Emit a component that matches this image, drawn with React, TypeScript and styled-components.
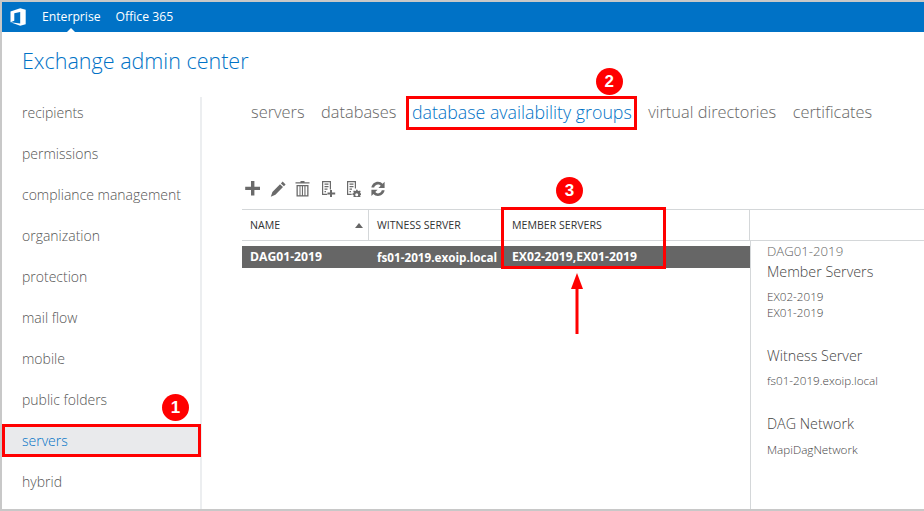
import styled, { createGlobalStyle } from 'styled-components';

const GlobalStyle = createGlobalStyle`
  html, body { margin: 0; padding: 0; background: #fff; }
  * { box-sizing: border-box; }
  body { font-family: "Open Sans", "Noto Sans", sans-serif; }
`;

const Frame = styled.div`
  position: relative;
  width: 924px;
  height: 511px;
  display: flex;
  flex-direction: column;
  overflow: hidden;
  background: #fff;
  border-top: 2px solid #c8c8c8;
  border-left: 2px solid #c8c8c8;
  border-bottom: 2px solid #c8c8c8;
`;

const TopBar = styled.header`
  flex: none;
  height: 30px;
  background: #0072c6;
  display: flex;
  align-items: center;
  padding-left: 8px;
  color: #fff;
  font-size: 12.2px;
`;

const TopLink = styled.span<{ $active?: boolean }>`
  position: relative;
  height: 30px;
  line-height: 30px;
  margin-right: 15px;
  &::after {
    content: '';
    display: ${(p) => (p.$active ? 'block' : 'none')};
    position: absolute;
    left: 50%;
    bottom: 0;
    margin-left: -4px;
    border: 4px solid transparent;
    border-top: 0;
    border-bottom-color: #fff;
  }
`;

const LogoWrap = styled.span`
  display: flex;
  width: 32px;
`;

const Title = styled.h1`
  flex: none;
  margin: 0;
  height: 65px;
  padding: 13px 0 0 20px;
  font-size: 21.5px;
  line-height: 32px;
  font-weight: 300;
  color: #0072c6;
`;

const Body = styled.div`
  flex: 1;
  display: flex;
  min-height: 0;
`;

const Sidebar = styled.nav`
  flex: none;
  width: 200px;
  border-right: 2px solid #eceef0;
  display: flex;
  flex-direction: column;
  gap: 9px;
`;

const SideItem = styled.div<{ $active?: boolean }>`
  position: relative;
  height: 32px;
  line-height: 32px;
  padding-left: 20px;
  font-size: 14px;
  font-weight: 300;
  color: ${(p) => (p.$active ? '#0072c6' : '#555')};
  background: ${(p) => (p.$active ? '#e9eaec' : 'transparent')};
  ${(p) => p.$active && `
    height: 33px;
    margin: -1px -1px 0 0;
    line-height: 34px;
    outline: 3px solid #f00;
    outline-offset: -3px;
    z-index: 1;
  `}
`;

const Main = styled.main`
  flex: 1;
  min-width: 0;
  display: flex;
  flex-direction: column;
`;

const Tabs = styled.div`
  flex: none;
  height: 30px;
  display: flex;
  align-items: center;
  padding-left: 49px;
  gap: 16.5px;
`;

const Tab = styled.span<{ $active?: boolean }>`
  position: relative;
  font-size: ${(p) => (p.$active ? '17.8px' : '16.4px')};
  line-height: 30px;
  font-weight: 300;
  color: ${(p) => (p.$active ? '#0072c6' : '#666')};
  margin-left: ${(p) => (p.$active ? '-1px' : '0')};
`;

const TabBox = styled.span`
  position: absolute;
  left: -6px;
  right: -5px;
  top: -1px;
  bottom: -3px;
  border: 3px solid #f00;
`;

const Toolbar = styled.div`
  flex: none;
  margin-top: 48px;
  height: 44px;
  padding: 6px 0 0 43px;
  display: flex;
  align-items: flex-start;
  gap: 9px;
`;

const ToolIcon = styled.svg`
  width: 16px;
  height: 16px;
  fill: #6a6a6a;
`;

const Split = styled.div`
  position: relative;
  flex: 1;
  display: flex;
  min-height: 0;
  margin-left: 40px;
  margin-top: -10px;
`;

const ListPane = styled.div`
  flex: none;
  width: 508px;
  display: flex;
  flex-direction: column;
`;

const HeaderRow = styled.div`
  flex: none;
  height: 32px;
  display: grid;
  grid-template-columns: 127px 133px 1fr;
  border-top: 1px solid #d4d7d9;
  border-bottom: 1px solid #d4d7d9;
`;

const HeaderCell = styled.div`
  position: relative;
  padding-left: 8px;
  font-size: 10.6px;
  line-height: 30px;
  color: #333;
  border-right: 1px solid #d4d7d9;
  &:nth-child(2) { padding-left: 8px; border-right: 0; }
  &:last-child { padding-left: 10px; }
`;

const SortCaret = styled.span`
  position: absolute;
  right: 5px;
  top: 13px;
  border: 4px solid transparent;
  border-top: 0;
  border-bottom: 5px solid #666;
`;

const DataRow = styled.div`
  flex: none;
  margin-top: 5px;
  height: 22px;
  display: grid;
  grid-template-columns: 127px 133px 1fr;
  background: #666;
  color: #fff;
  font-size: 12.2px;
  font-weight: 700;
  line-height: 22px;
`;

const DataCell = styled.div`
  padding-left: 8px;
  white-space: nowrap;
  overflow: hidden;
  &:nth-child(2) { font-size: 11.7px; }
  &:last-child { padding-left: 10px; }
`;

const DetailPane = styled.aside`
  flex: 1;
  display: flex;
  flex-direction: column;
  min-width: 0;
`;

const DetailHead = styled.div`
  flex: none;
  height: 32px;
  border-top: 1px solid #d4d7d9;
  border-bottom: 1px solid #d4d7d9;
`;

const DetailBody = styled.div`
  flex: 1;
  border-left: 1px solid #d4d7d9;
  padding: 1px 0 0 16px;
  color: #444;
`;

const DetailName = styled.div`
  font-size: 13.2px;
  line-height: 18px;
  font-weight: 300;
  color: #666;
`;

const DetailHeading = styled.div<{ $gap: number }>`
  font-size: 14.3px;
  line-height: 20px;
  font-weight: 300;
  margin-top: ${(p) => p.$gap}px;
`;

const DetailValues = styled.div<{ $gap: number }>`
  font-size: 11.7px;
  line-height: 16px;
  font-weight: 300;
  margin-top: ${(p) => p.$gap}px;
`;

const MemberBox = styled.div`
  position: absolute;
  left: 259px;
  top: -2px;
  width: 165px;
  height: 62px;
  border: 3px solid #f00;
`;

const Badge = styled.span`
  position: absolute;
  width: 27px;
  height: 27px;
  border-radius: 50%;
  background: #f00;
  color: #fff;
  font-family: "Liberation Sans", sans-serif;
  font-weight: 700;
  font-size: 17px;
  line-height: 27px;
  text-align: center;
`;

const SideBadge = styled(Badge)`
  right: 12px;
  top: -30px;
`;

const TabBadge = styled(Badge)`
  right: 9px;
  top: -29px;
`;

const MemberBadge = styled(Badge)`
  left: 52px;
  top: -33px;
`;

const Arrow = styled.svg`
  position: absolute;
  left: 67px;
  top: 63px;
  width: 12px;
  height: 61px;
`;

const sideItems = [
  'recipients',
  'permissions',
  'compliance management',
  'organization',
  'protection',
  'mail flow',
  'mobile',
  'public folders',
  'servers',
  'hybrid',
];

export default function App() {
  return (
    <Frame>
      <GlobalStyle />
      <TopBar>
        <LogoWrap>
          <svg width="16" height="18" viewBox="0 0 16 18">
            <path fill="#fff" d="M.5 3.600 10.200.3 15.700 1.800v14.400l-5.500 1.600-9.700-3.500 9.700 1.200V4L4.300 5.300v7.500L.5 14.300z" />
          </svg>
        </LogoWrap>
        <TopLink $active>Enterprise</TopLink>
        <TopLink>Office 365</TopLink>
      </TopBar>
      <Title>Exchange admin center</Title>
      <Body>
        <Sidebar>
          {sideItems.map((item) => (
            <SideItem key={item} $active={item === 'servers'}>
              {item}
              {item === 'servers' && <SideBadge>1</SideBadge>}
            </SideItem>
          ))}
        </Sidebar>
        <Main>
          <Tabs>
            <Tab>servers</Tab>
            <Tab>databases</Tab>
            <Tab $active>
              database availability groups
              <TabBox />
              <TabBadge>2</TabBadge>
            </Tab>
            <Tab>virtual directories</Tab>
            <Tab>certificates</Tab>
          </Tabs>
          <Toolbar>
            <ToolIcon viewBox="0 0 16 16"><path d="M6 0h3.400v5.700H15v3.300H9.400v5.600H6V9H.2V5.700H6z" /></ToolIcon>
            <ToolIcon viewBox="0 0 16 16"><path d="M12.600.6l3 2.800-1.700 1.800-3-2.800zM10 3.200l3 2.800-7.600 7.700-4.600 2 1.600-4.700z" /></ToolIcon>
            <ToolIcon viewBox="0 0 16 16"><path fillRule="evenodd" d="M5.500 0h4v1.300h5v1.200h-14V1.300h5zM1.500 4h12v11.500h-12zM2.800 5.300v9h1.700v-9zM5.500 5.300v9h1.400v-9zM8 5.300v9h1.400v-9zM10.500 5.300v9h1.700v-9z" /></ToolIcon>
            <ToolIcon viewBox="0 0 16 16"><path fillRule="evenodd" d="M2 0h9v8.500H9.800V1.200H3.200v11.600h4v1.200H2zM4.500 2.500h4v1.200h-4zM4.500 5h4v1.200h-4zM4.500 7.500h3v1.200h-3zM4.500 10h1.500v1.200H4.500zM10 9h2v2.500h3.200v2H12V16h-2v-2.500H7.500v-2H10z" /></ToolIcon>
            <ToolIcon viewBox="0 0 16 16"><path fillRule="evenodd" d="M2 0h9v7.500H9.800V1.200H3.200v11.600h3.500V14H2zM4.500 2.500h4v1.200h-4zM4.500 5h4v1.200h-4zM4.500 7.500h2.500v1.200H4.500zM4.500 10h1.500v1.200H4.500zM11.500 8.500l1 .3.300 1 1.200.2.900-.6.800.9-.6 1 .3 1 1.100.3v1.200l-1.100.3-.3 1 .6 .8-.8.8-1-.5-1 .3-.3 1h-1.300l-.3-1-1-.3-1 .5-.8-.8.6-.8-.4-1-1-.3v-1.200l1-.3.4-1-.6-1 .8-.9 1 .6 1-.2.300-1zm.2 3.800a1.500 1.500 0 1 0 0 3 1.500 1.500 0 0 0 0-3z" /></ToolIcon>
            <ToolIcon viewBox="0 0 16 16"><path d="M8 .8c2 0 3.500.8 4.600 2L14.600.800v6.200H8.400l2.300-2.300C10 3.900 9.100 3.400 8 3.400 6.200 3.400 4.600 4.700 4.200 6.500H1.400C1.900 3.200 4.700.8 8 .8zM1.400 15V8.800h6.200l-2.300 2.300c.7.800 1.600 1.300 2.700 1.300 1.800 0 3.400-1.300 3.800-3.100h2.800c-.5 3.300-3.300 5.700-6.600 5.700-2 0-3.500-.8-4.600-2z" /></ToolIcon>
          </Toolbar>
          <Split>
            <ListPane>
              <HeaderRow>
                <HeaderCell>NAME<SortCaret /></HeaderCell>
                <HeaderCell>WITNESS SERVER</HeaderCell>
                <HeaderCell>MEMBER SERVERS</HeaderCell>
              </HeaderRow>
              <DataRow>
                <DataCell>DAG01-2019</DataCell>
                <DataCell>fs01-2019.exoip.local</DataCell>
                <DataCell>EX02-2019,EX01-2019</DataCell>
              </DataRow>
            </ListPane>
            <DetailPane>
              <DetailHead />
              <DetailBody>
                <DetailName>DAG01-2019</DetailName>
                <DetailHeading $gap={2}>Member Servers</DetailHeading>
                <DetailValues $gap={6}>EX02-2019<br />EX01-2019</DetailValues>
                <DetailHeading $gap={26}>Witness Server</DetailHeading>
                <DetailValues $gap={6}>fs01-2019.exoip.local</DetailValues>
                <DetailHeading $gap={26}>DAG Network</DetailHeading>
                <DetailValues $gap={7}>MapiDagNetwork</DetailValues>
              </DetailBody>
            </DetailPane>
            <MemberBox>
              <MemberBadge>3</MemberBadge>
              <Arrow viewBox="0 0 12 61">
                <path fill="#f00" d="M6 0l6 16H7.500V61h-3V16H0z" />
              </Arrow>
            </MemberBox>
          </Split>
        </Main>
      </Body>
    </Frame>
  );
}
